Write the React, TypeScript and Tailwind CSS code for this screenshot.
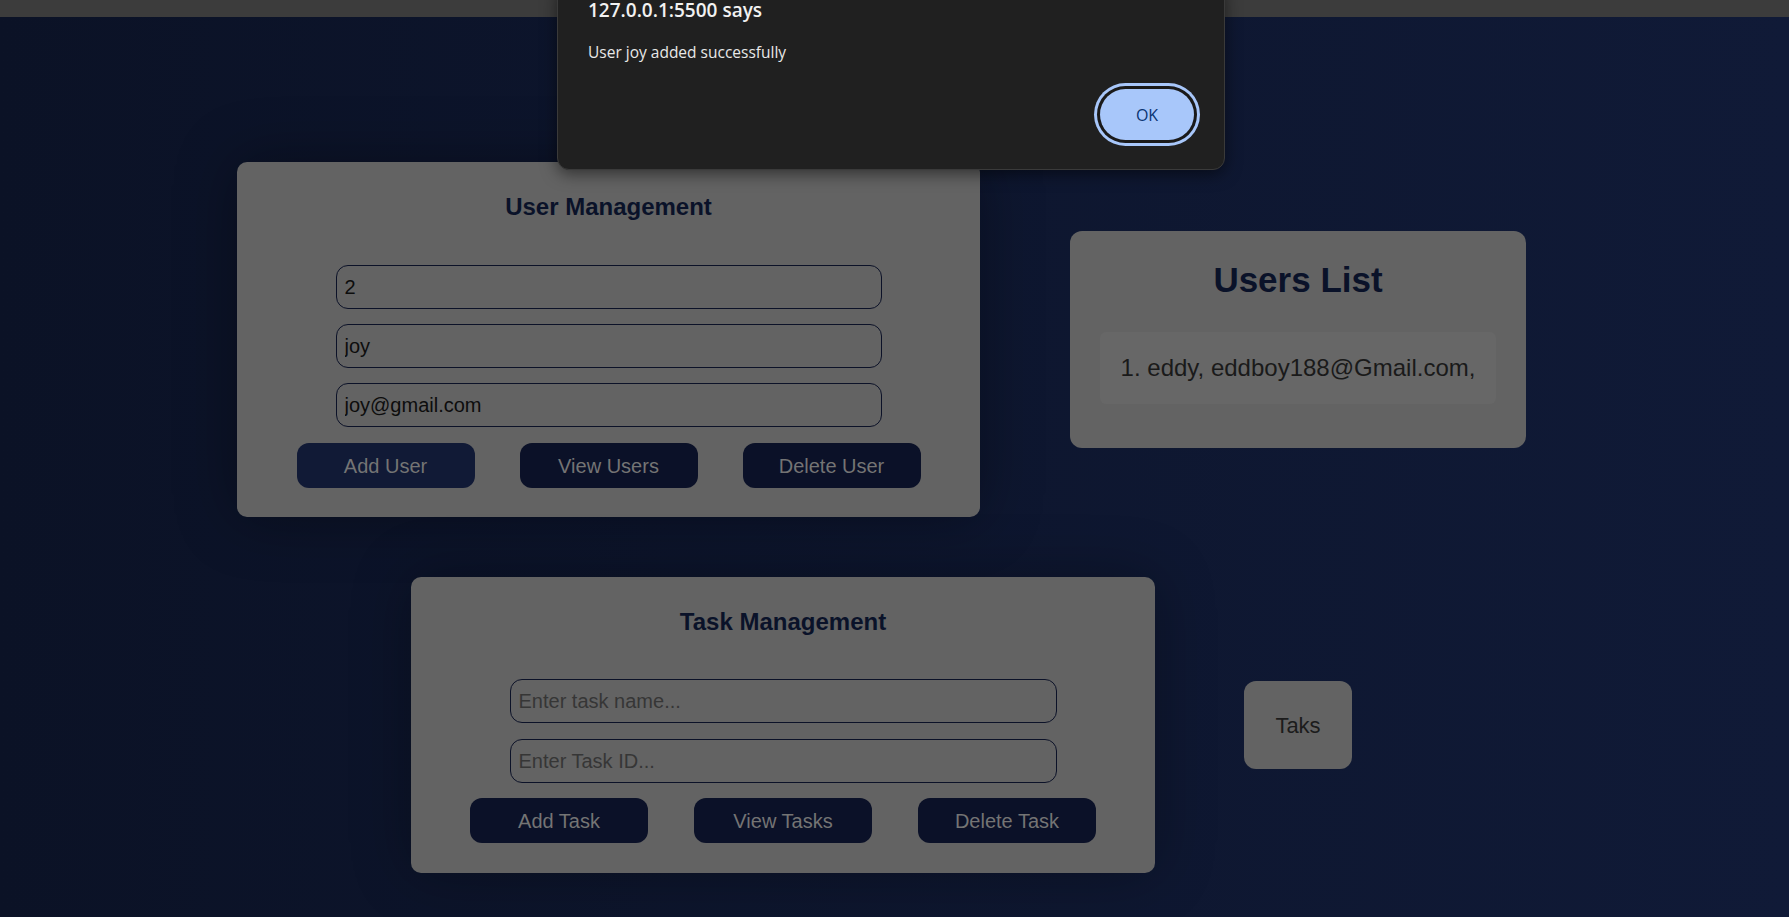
import React from "react";

function Field({ value, placeholder, wide }: { value?: string; placeholder?: string; wide?: boolean }) {
    return (
        <input
            readOnly
            value={value}
            placeholder={placeholder}
            className={`${wide ? "w-[547px]" : "w-[546px]"} h-[44px] rounded-[12px] border border-[#0c1228] bg-transparent px-[8px] text-[20px] text-[#0d0d0d] placeholder:text-[#363636] outline-none`}
        />
    );
}

function ActionButton({ label, active }: { label: string; active?: boolean }) {
    return (
        <button
            className={`w-[178px] h-[45px] rounded-[12px] text-[20px] text-[#747474] ${active ? "bg-[#111a36]" : "bg-[#0b1128]"}`}
        >
            {label}
        </button>
    );
}

function UserManagement() {
    return (
        <section className="w-[743px] h-[355px] rounded-[10px] bg-[#636363] flex flex-col items-center pt-[31px] shadow-[0_0_60px_rgba(0,0,0,0.35)]">
            <h2 className="text-[24px] leading-[28px] font-bold text-[#0a1229]">User Management</h2>
            <div className="mt-[44px] flex flex-col gap-[15px]">
                <Field value="2" />
                <Field value="joy" />
                <Field value="joy@gmail.com" />
            </div>
            <div className="mt-[16px] flex gap-[45px]">
                <ActionButton label="Add User" active />
                <ActionButton label="View Users" />
                <ActionButton label="Delete User" />
            </div>
        </section>
    );
}

function UsersList() {
    return (
        <section className="w-[456px] h-[217px] rounded-[12px] bg-[#636363] flex flex-col items-center pt-[29px]">
            <h2 className="text-[35px] leading-[40px] font-bold text-[#0a1229]">Users List</h2>
            <ul className="mt-[32px] w-[396px] h-[72px] rounded-[6px] bg-[#676767] flex items-center justify-center">
                <li className="text-[24px] text-[#1a1a1a]">1. eddy, eddboy188@Gmail.com,</li>
            </ul>
        </section>
    );
}

function TaskManagement() {
    return (
        <section className="w-[744px] h-[296px] rounded-[10px] bg-[#636363] flex flex-col items-center pt-[31px] shadow-[0_0_60px_rgba(0,0,0,0.3)]">
            <h2 className="text-[24px] leading-[28px] font-bold text-[#0a1229]">Task Management</h2>
            <div className="mt-[43px] flex flex-col gap-[16px]">
                <Field placeholder="Enter task name..." wide />
                <Field placeholder="Enter Task ID..." wide />
            </div>
            <div className="mt-[15px] flex gap-[46px]">
                <ActionButton label="Add Task" />
                <ActionButton label="View Tasks" />
                <ActionButton label="Delete Task" />
            </div>
        </section>
    );
}

// 브라우저 alert 창 흉내
function AlertDialog() {
    return (
        <div className="absolute left-[557px] top-[-16px] w-[668px] h-[186px] rounded-[12px] border border-[#3a3a3a] bg-[#202020] px-[30px] pt-[13px] shadow-[0_4px_16px_rgba(0,0,0,0.5)] font-['Open_Sans','Noto_Sans',sans-serif]">
            <div className="text-[19px] leading-[24px] font-semibold text-[#f1f1f1]">127.0.0.1:5500 says</div>
            <div className="mt-[20px] text-[15.5px] leading-[20px] text-[#e8e8e8]">User joy added successfully</div>
            <div className="mt-[27px] flex justify-end">
                <button className="w-[94px] h-[51px] rounded-full bg-[#a8c7fa] text-[16px] font-medium text-[#0a3472] shadow-[0_0_0_3px_#1a1a1a,0_0_0_6px_#a8c7fa]">
                    OK
                </button>
            </div>
        </div>
    );
}

export default function App() {
    return (
        <div className="relative h-[917px] overflow-hidden bg-linear-to-r from-[#0b1226] to-[#101a37] font-['Liberation_Sans',Arial,sans-serif]">
            <div className="h-[17px] bg-[#3c3c3c]" />
            <main className="flex flex-col items-center gap-[60px] pt-[145px] pr-[26px]">
                <div className="flex items-center gap-[90px]">
                    <UserManagement />
                    <UsersList />
                </div>
                <div className="flex items-center gap-[89px]">
                    <TaskManagement />
                    <div className="w-[108px] h-[88px] rounded-[12px] bg-[#636363] flex items-center justify-center text-[22px] text-[#1c1c1c]">
                        Taks
                    </div>
                </div>
            </main>
            <AlertDialog />
        </div>
    );
}
